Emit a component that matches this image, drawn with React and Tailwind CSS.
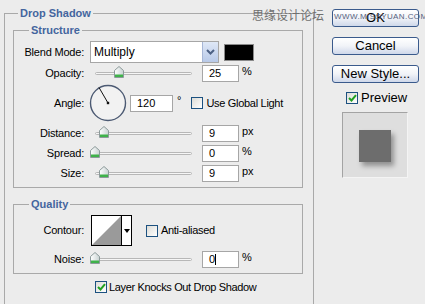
const font = { fontFamily: '"Liberation Sans", Arial, sans-serif' };

function Thumb({ center }) {
  return (
    <svg width="10" height="12" viewBox="0 0 10 12" className="absolute top-[-1px]" style={{ left: center - 90 - 5 }}>
      <defs>
        <linearGradient id="tg" x1="0" y1="0" x2="1" y2="0">
          <stop offset="0" stopColor="#ffffff" />
          <stop offset="1" stopColor="#c9d3d3" />
        </linearGradient>
      </defs>
      <path d="M5 0.5 L9.5 4.5 L9.5 11.5 L0.5 11.5 L0.5 4.5 Z" fill="url(#tg)" stroke="#8c9a9a" />
      <rect x="1" y="8.5" width="8" height="2.5" fill="#3fb24a" />
    </svg>
  );
}

// slider box starts at x=90, track runs 95..192
function Slider({ at }) {
  return (
    <div className="relative ml-[5px] w-[107px] h-[12px] mt-[-1px] shrink-0">
      <div className="absolute left-[5px] top-[5px] w-[97px] h-[3px] rounded-full bg-[#f6f6f6] border border-[#b7b7b7]" />
      <Thumb center={at} />
    </div>
  );
}

function Field({ value, cursor, w = 'w-[37px]' }) {
  return (
    <div className={`${w} h-[17px] bg-white border border-[#a6a6a6] pl-[6px] text-[11px] leading-[15px] text-black flex items-center`}>
      {value}
      {cursor && <span className="inline-block w-px h-[11px] bg-black" />}
    </div>
  );
}

function Check({ checked }) {
  return (
    <div className="w-[12px] h-[12px] border border-[#1c5180] bg-gradient-to-br from-[#dcdcd7] to-white flex items-center justify-center shrink-0">
      {checked && (
        <svg width="9" height="8" viewBox="0 0 9 8">
          <path d="M1 4 L3.5 6.5 L8 1.2" fill="none" stroke="#21a121" strokeWidth="2" />
        </svg>
      )}
    </div>
  );
}

function Label({ children }) {
  return <div className="w-[71px] text-right pr-[1px] text-[11px] tracking-[-0.2px] text-black shrink-0">{children}</div>;
}

function Button({ children, className = '' }) {
  return (
    <div
      className={`w-[87px] h-[18px] rounded-[3px] border border-[#3a5a8c] bg-gradient-to-b from-white via-[#f1f3f8] to-[#cfd8ea] flex items-center justify-center text-[13px] text-black ${className}`}
    >
      {children}
    </div>
  );
}

function Group({ title, className = '', children }) {
  return (
    <div className={`relative border border-[#a9a9a9] ${className}`}>
      <span className="absolute left-[15px] top-[-8px] px-[2px] bg-[#ececec] text-[11px] font-bold text-[#44659e] leading-[14px]">
        {title}
      </span>
      {children}
    </div>
  );
}

export default function App() {
  return (
    <div className="relative w-[425px] h-[304px] overflow-hidden bg-[#ececec] flex" style={font}>
      <div className="pl-[4px] pt-[13px]">
        <div className="relative w-[310px] h-[300px] border-t border-l border-r border-[#a9a9a9] pl-[8px] pt-[16px]">
          <span className="absolute left-[13px] top-[-8px] px-[2px] bg-[#ececec] text-[11px] font-bold text-[#44659e] leading-[14px]">
            Drop Shadow
          </span>

          <Group title="Structure" className="w-[290px] h-[158px] pt-[10px]">
            <div className="flex items-center h-[22px]">
              <Label>Blend Mode:</Label>
              <div className="ml-[5px] w-[129px] h-[22px] bg-white border border-[#a6a6a6] flex items-center">
                <span className="pl-[3px] text-[12px] flex-1">Multiply</span>
                <div className="w-[16px] h-[20px] border-l border-[#a6b6d6] bg-gradient-to-b from-[#dfe8f7] to-[#b8c9e8] flex items-center justify-center">
                  <svg width="9" height="6" viewBox="0 0 9 6">
                    <path d="M1 1 L4.5 4.5 L8 1" fill="none" stroke="#4d6185" strokeWidth="2" />
                  </svg>
                </div>
              </div>
              <div className="ml-[5px] w-[30px] h-[17px] bg-black border border-[#8a8a8a]" />
            </div>

            <div className="flex items-center h-[17px] mt-[2px]">
              <Label>Opacity:</Label>
              <Slider at={119} />
              <div className="ml-[5px]"><Field value="25" /></div>
              <span className="ml-[3px] text-[11px] mt-[-4px]">%</span>
            </div>

            <div className="flex items-center h-[36px] mt-[3px]">
              <Label>Angle:</Label>
              <svg width="38" height="38" viewBox="0 0 38 38" className="ml-[4px] shrink-0">
                <circle cx="19" cy="19" r="17.5" fill="#f2f2f2" stroke="#4c5a73" strokeWidth="1.4" />
                <line x1="19" y1="19" x2="10" y2="3.5" stroke="#111" strokeWidth="1" />
                <rect x="17.8" y="17.8" width="2.4" height="2.4" fill="#111" />
              </svg>
              <div className="ml-[3px]"><Field value="120" w="w-[43px]" /></div>
              <span className="ml-[4px] text-[11px] mt-[-6px]">°</span>
              <div className="ml-[10px]"><Check /></div>
              <span className="ml-[3px] text-[11px] tracking-[-0.3px]">Use Global Light</span>
            </div>

            <div className="flex items-center h-[17px] mt-[4px]">
              <Label>Distance:</Label>
              <Slider at={104} />
              <div className="ml-[5px]"><Field value="9" /></div>
              <span className="ml-[3px] text-[11px] mt-[-4px]">px</span>
            </div>

            <div className="flex items-center h-[17px] mt-[3px]">
              <Label>Spread:</Label>
              <Slider at={95} />
              <div className="ml-[5px]"><Field value="0" /></div>
              <span className="ml-[3px] text-[11px] mt-[-4px]">%</span>
            </div>

            <div className="flex items-center h-[17px] mt-[3px]">
              <Label>Size:</Label>
              <Slider at={104} />
              <div className="ml-[5px]"><Field value="9" /></div>
              <span className="ml-[3px] text-[11px] mt-[-4px]">px</span>
            </div>
          </Group>

          <Group title="Quality" className="w-[290px] h-[70px] mt-[16px] pt-[10px]">
            <div className="flex items-center h-[31px]">
              <Label>Contour:</Label>
              <div className="ml-[6px] w-[41px] h-[31px] border border-black bg-white flex">
                <svg width="29" height="29" viewBox="0 0 29 29" className="shrink-0">
                  <polygon points="0,29 29,0 29,29" fill="#9a9a9a" />
                </svg>
                <div className="flex-1 border-l border-black flex items-center justify-center">
                  <svg width="6" height="4" viewBox="0 0 6 4">
                    <polygon points="0,0 6,0 3,4" fill="#000" />
                  </svg>
                </div>
              </div>
              <div className="ml-[14px]"><Check /></div>
              <span className="ml-[3px] text-[11px] tracking-[-0.3px]">Anti-aliased</span>
            </div>
            <div className="flex items-center h-[17px] mt-[5px]">
              <Label>Noise:</Label>
              <Slider at={95} />
              <div className="ml-[5px]"><Field value="0" cursor /></div>
              <span className="ml-[3px] text-[11px] mt-[-4px]">%</span>
            </div>
          </Group>

          <div className="flex items-center mt-[7px] pl-[82px] h-[12px]">
            <Check checked />
            <span className="ml-[2px] text-[11px] tracking-[-0.35px]">Layer Knocks Out Drop Shadow</span>
          </div>
        </div>
      </div>

      <div className="ml-[18px] pt-[9px] flex flex-col">
        <Button>OK</Button>
        <Button className="mt-[10px]">Cancel</Button>
        <Button className="mt-[10px]">New Style...</Button>
        <div className="flex items-center mt-[8px] pl-[14px] h-[13px]">
          <Check checked />
          <span className="ml-[3px] text-[13px]">Preview</span>
        </div>
        <div className="ml-[10px] mt-[8px] w-[66px] h-[66px] bg-[#dedede] border-l border-t border-[#a3a3a3] border-r-[#f4f4f4] border-b-[#f4f4f4] border-r border-b pl-[16px] pt-[17px]">
          <div className="w-[32px] h-[32px] bg-[#6d6d6d] shadow-[3px_4px_5px_rgba(0,0,0,0.35)]" />
        </div>
      </div>

      <div
        className="absolute left-[252px] top-[7px] whitespace-nowrap text-[12px] text-[#6f6f6f] leading-[16px]"
        style={{ fontFamily: '"Noto Sans CJK SC", sans-serif' }}
      >
        思缘设计论坛
      </div>
      <div className="absolute left-[334px] top-[12px] whitespace-nowrap text-[8px] tracking-[0.4px] text-[#55627e] leading-[10px]">
        WWW.MISSYUAN.COM
      </div>
    </div>
  );
}
